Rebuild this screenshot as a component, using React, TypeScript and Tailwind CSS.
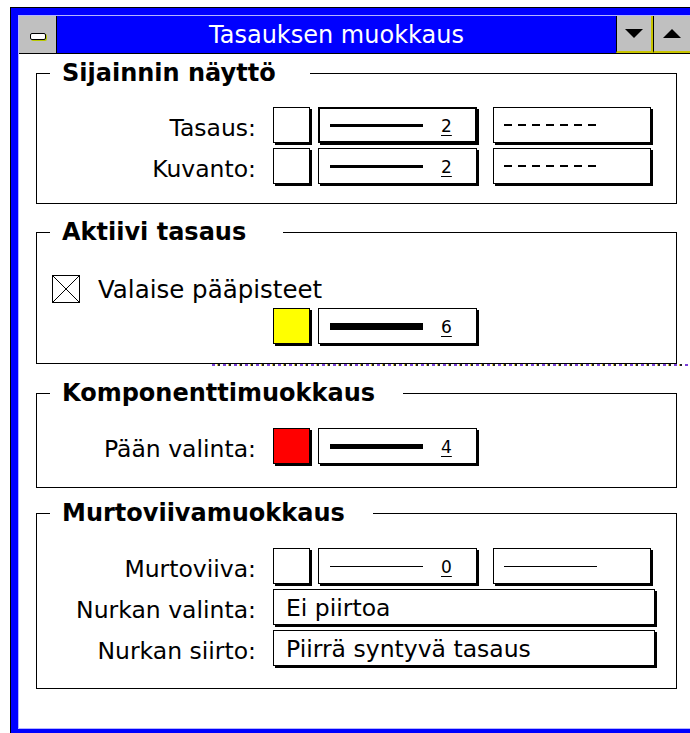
import React from "react";

const FONT = { fontFamily: '"DejaVu Sans", "Liberation Sans", sans-serif' };

function SysMenu() {
  return (
    <div className="w-[38px] h-full bg-[#c0c0c0] border-r border-black flex items-center justify-center pt-[3px] pl-[1px]">
      <div className="w-[16px] h-[7px] rounded-[2px] border border-black bg-white shadow-[1px_1px_0_0_#b8c800]" />
    </div>
  );
}

function ArrowButton({ dir, last }: { dir: "down" | "up"; last?: boolean }) {
  return (
    <div
      className={
        "w-[37px] h-full border-l border-black bg-[#c0c0c0] border-b-2 border-b-[#c8c400] flex items-center justify-center " +
        (last ? "" : "border-r-2 border-r-[#c8c400]")
      }
    >
      <svg width="20" height="10" viewBox="0 0 20 10">
        {dir === "down" ? (
          <polygon points="1,0 19,0 10,9" fill="#000" />
        ) : (
          <polygon points="10,0 19,9 1,9" fill="#000" />
        )}
      </svg>
    </div>
  );
}

function Box({
  className = "",
  bg = "bg-white",
  children,
  thick,
}: {
  className?: string;
  bg?: string;
  children?: React.ReactNode;
  thick?: boolean;
}) {
  return (
    <div
      className={
        "h-[36px] shadow-[2px_2px_0_0_#000] flex items-center " +
        bg +
        " " +
        (thick ? "border-2 border-black " : "border border-black ") +
        className
      }
    >
      {children}
    </div>
  );
}

function ColorBox({ bg }: { bg: string }) {
  return <Box className="w-[37px]" bg={bg} />;
}

function LineBox({ weight, num, thick }: { weight: string; num: string; thick?: boolean }) {
  return (
    <Box className="w-[159px] ml-[8px]" thick={thick}>
      <div className={(thick ? "ml-[10px] " : "ml-[11px] ") + "w-[93px] bg-black " + weight} />
      <span className="ml-[18px] text-[17px] leading-none underline underline-offset-[3px] pt-[2px]">
        {num}
      </span>
    </Box>
  );
}

function DashBox({ solid }: { solid?: boolean }) {
  return (
    <Box className="w-[158px] ml-[16px]">
      <svg width="94" height="4" viewBox="0 0 94 4" className="ml-[10px]" shapeRendering="crispEdges">
        {solid ? (
          <rect x="0" y="2" width="93" height="1" fill="#000" />
        ) : (
          <line x1="0" y1="2" x2="94" y2="2" stroke="#000" strokeWidth="2" strokeDasharray="8 6" />
        )}
      </svg>
    </Box>
  );
}

function Label({ children }: { children: React.ReactNode }) {
  return (
    <div className="w-[219px] mr-[17px] text-right text-[23.5px] leading-none pt-[6px] whitespace-nowrap">
      {children}
    </div>
  );
}

function Row({ label, children }: { label: React.ReactNode; children: React.ReactNode }) {
  return (
    <div className="flex items-center h-[38px]">
      <Label>{label}</Label>
      <div className="flex items-start h-[38px]">{children}</div>
    </div>
  );
}

function Group({
  title,
  titleWidth,
  height,
  className = "",
  children,
}: {
  title: string;
  titleWidth: string;
  height: string;
  className?: string;
  children: React.ReactNode;
}) {
  return (
    <div className={"relative w-[641px] border border-black " + height + " " + className}>
      <div
        className={
          "absolute left-[13px] top-[-15px] h-[28px] bg-white pl-[12px] text-[24px] font-bold leading-[28px] whitespace-nowrap " +
          titleWidth
        }
      >
        {title}
      </div>
      {children}
    </div>
  );
}

export default function App() {
  return (
    <div className="w-[690px] h-[733px] bg-white overflow-hidden text-black" style={FONT}>
      <div className="ml-[10px] mt-[7px] w-[680px] h-[726px] border-l border-t border-black bg-[#0000ff] pl-[7px] pt-[7px] pb-[4px]">
        <div className="h-full border-l border-t border-b border-[#b4b4ff] flex flex-col">
          {/* caption bar */}
          <div className="h-[38px] flex border-b border-black shrink-0">
            <SysMenu />
            <div className="flex-1 bg-[#0000ff] flex items-center justify-center text-white text-[24px] leading-none pt-[1px]">
              Tasauksen muokkaus
            </div>
            <ArrowButton dir="down" />
            <ArrowButton dir="up" last />
          </div>

          {/* dialog body */}
          <div className="flex-1 bg-white pl-[17px] pt-[19px]">
            <Group title="Sijainnin näyttö" titleWidth="w-[260px]" height="h-[131px]" className="pt-[33px]">
              <div className="flex flex-col gap-[3px]">
                <Row label="Tasaus:">
                  <ColorBox bg="bg-white" />
                  <LineBox weight="h-[3px]" num="2" thick />
                  <DashBox />
                </Row>
                <Row label="Kuvanto:">
                  <ColorBox bg="bg-white" />
                  <LineBox weight="h-[3px]" num="2" />
                  <DashBox />
                </Row>
              </div>
            </Group>

            <Group title="Aktiivi tasaus" titleWidth="w-[233px]" height="h-[132px]" className="mt-[28px] pt-[42px]">
              <div className="flex items-center h-[28px] pl-[15px]">
                <svg width="28" height="28" viewBox="0 0 28 28" className="shrink-0">
                  <rect x="0.5" y="0.5" width="27" height="27" fill="#fff" stroke="#000" />
                  <line x1="1" y1="1" x2="27" y2="27" stroke="#000" strokeWidth="1" />
                  <line x1="27" y1="1" x2="1" y2="27" stroke="#000" strokeWidth="1" />
                </svg>
                <span className="ml-[18px] text-[24.5px] leading-none pt-[2px] whitespace-nowrap">
                  Valaise pääpisteet
                </span>
              </div>
              <div className="flex items-start h-[38px] mt-[5px] pl-[236px]">
                <ColorBox bg="bg-[#ffff00]" />
                <LineBox weight="h-[7px]" num="6" />
              </div>
            </Group>

            {/* redraw speckle left under the panel */}
            <div className="ml-[176px] h-[2px] w-[495px] bg-[repeating-linear-gradient(90deg,#7a3fd8_0_3px,transparent_3px_5px,#e0c83c_5px_6px,#222_6px_8px,transparent_8px_11px)]" />

            <Group title="Komponenttimuokkaus" titleWidth="w-[353px]" height="h-[95px]" className="mt-[27px] pt-[34px]">
              <Row label="Pään valinta:">
                <ColorBox bg="bg-[#ff0000]" />
                <LineBox weight="h-[5px]" num="4" />
              </Row>
            </Group>

            <Group title="Murtoviivamuokkaus" titleWidth="w-[323px]" height="h-[176px]" className="mt-[25px] pt-[34px]">
              <div className="flex flex-col gap-[3px]">
                <Row label="Murtoviiva:">
                  <ColorBox bg="bg-white" />
                  <LineBox weight="h-[1px]" num="0" />
                  <DashBox solid />
                </Row>
                <Row label="Nurkan valinta:">
                  <Box className="w-[382px]">
                    <span className="pl-[12px] text-[23.5px] leading-none pt-[3px]">Ei piirtoa</span>
                  </Box>
                </Row>
                <Row label="Nurkan siirto:">
                  <Box className="w-[382px]">
                    <span className="pl-[12px] text-[23.5px] leading-none pt-[3px]">Piirrä syntyvä tasaus</span>
                  </Box>
                </Row>
              </div>
            </Group>
          </div>
        </div>
      </div>
    </div>
  );
}
